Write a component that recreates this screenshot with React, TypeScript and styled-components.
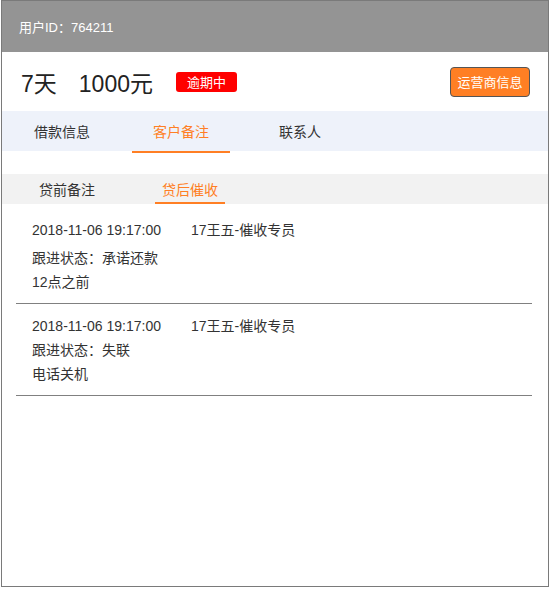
import React, { useState } from "react";
import styled, { createGlobalStyle } from "styled-components";

const Global = createGlobalStyle`
  html, body { margin: 0; padding: 0; background: #fff; }
  body { font-family: "Liberation Sans", Arial, "Noto Sans CJK SC", sans-serif; color: #333; }
`;

const Frame = styled.div`
  margin-left: 1px;
  width: 548px;
  height: 587px;
  box-sizing: border-box;
  border: 1px solid #7a7a7a;
  display: flex;
  flex-direction: column;
  overflow: hidden;
`;

const TopBar = styled.div`
  height: 52px;
  flex-shrink: 0;
  background: #949494;
  color: #fff;
  font-size: 13px;
  display: flex;
  align-items: center;
  padding-left: 17px;
  margin-top: -1px;
`;

const Summary = styled.div`
  height: 59px;
  flex-shrink: 0;
  display: flex;
  align-items: center;
  padding: 0 18px 0 19px;
`;

const BigText = styled.span<{ $gap?: number }>`
  font-size: 23px;
  color: #222;
  margin-left: ${(p) => p.$gap ?? 0}px;
`;

const Badge = styled.span`
  margin-left: 23px;
  width: 61px;
  height: 20px;
  border-radius: 3px;
  background: #ff0000;
  color: #fff;
  font-size: 13px;
  display: flex;
  align-items: center;
  justify-content: center;
`;

const Spacer = styled.div`
  flex: 1;
`;

const OrangeButton = styled.button`
  width: 80px;
  height: 30px;
  border: 1px solid #555;
  border-radius: 4px;
  background: #ff7f24;
  color: #fff;
  font-family: inherit;
  font-size: 13px;
  padding: 0;
  cursor: pointer;
`;

const MainTabs = styled.div`
  height: 40px;
  flex-shrink: 0;
  background: #eef2fa;
  display: flex;
  padding-left: 11px;
  gap: 21px;
`;

const MainTab = styled.div<{ $active?: boolean }>`
  width: 98px;
  height: 40px;
  box-sizing: border-box;
  display: flex;
  align-items: center;
  justify-content: center;
  font-size: 14px;
  color: ${(p) => (p.$active ? "#ff7f24" : "#333")};
  position: relative;
  cursor: pointer;
  &::after {
    content: "";
    display: ${(p) => (p.$active ? "block" : "none")};
    position: absolute;
    left: 0;
    right: 0;
    bottom: -2px;
    height: 2px;
    background: #ff7f24;
  }
`;

const SubTabs = styled.div`
  margin-top: 23px;
  height: 30px;
  flex-shrink: 0;
  background: #f2f2f2;
  display: flex;
  padding-left: 30px;
  gap: 53px;
`;

const SubTab = styled.div<{ $active?: boolean }>`
  width: 70px;
  height: 30px;
  box-sizing: border-box;
  display: flex;
  align-items: center;
  justify-content: center;
  font-size: 14px;
  color: ${(p) => (p.$active ? "#ff7f24" : "#333")};
  border-bottom: 2px solid ${(p) => (p.$active ? "#ff7f24" : "transparent")};
  padding-top: 2px;
  cursor: pointer;
`;

const List = styled.div`
  padding: 4px 16px 0 14px;
`;

const Record = styled.div`
  padding: 10px 0 9px 16px;
  border-bottom: 1px solid #808080;
  font-size: 14px;
  color: #333;
`;

const Line = styled.div<{ $extra?: number }>`
  line-height: 24px;
  margin-bottom: ${(p) => p.$extra ?? 0}px;
`;

const Staff = styled.span`
  margin-left: 30px;
`;

const records = [
  { time: "2018-11-06 19:17:00", staff: "17王五-催收专员", status: "承诺还款", note: "12点之前", extra: 4 },
  { time: "2018-11-06 19:17:00", staff: "17王五-催收专员", status: "失联", note: "电话关机", extra: 0 },
];

export default function App() {
  const [tab, setTab] = useState(1);
  const [sub, setSub] = useState(1);
  const tabs = ["借款信息", "客户备注", "联系人"];
  const subs = ["贷前备注", "贷后催收"];
  return (
    <>
      <Global />
      <Frame>
        <TopBar>用户ID：764211</TopBar>
        <Summary>
          <BigText>7天</BigText>
          <BigText $gap={22}>1000元</BigText>
          <Badge>逾期中</Badge>
          <Spacer />
          <OrangeButton>运营商信息</OrangeButton>
        </Summary>
        <MainTabs>
          {tabs.map((t, i) => (
            <MainTab key={t} $active={i === tab} onClick={() => setTab(i)}>
              {t}
            </MainTab>
          ))}
        </MainTabs>
        <SubTabs>
          {subs.map((t, i) => (
            <SubTab key={t} $active={i === sub} onClick={() => setSub(i)}>
              {t}
            </SubTab>
          ))}
        </SubTabs>
        <List>
          {records.map((r, i) => (
            <Record key={i}>
              <Line $extra={r.extra}>
                {r.time}
                <Staff>{r.staff}</Staff>
              </Line>
              <Line>跟进状态：{r.status}</Line>
              <Line>{r.note}</Line>
            </Record>
          ))}
        </List>
      </Frame>
    </>
  );
}
